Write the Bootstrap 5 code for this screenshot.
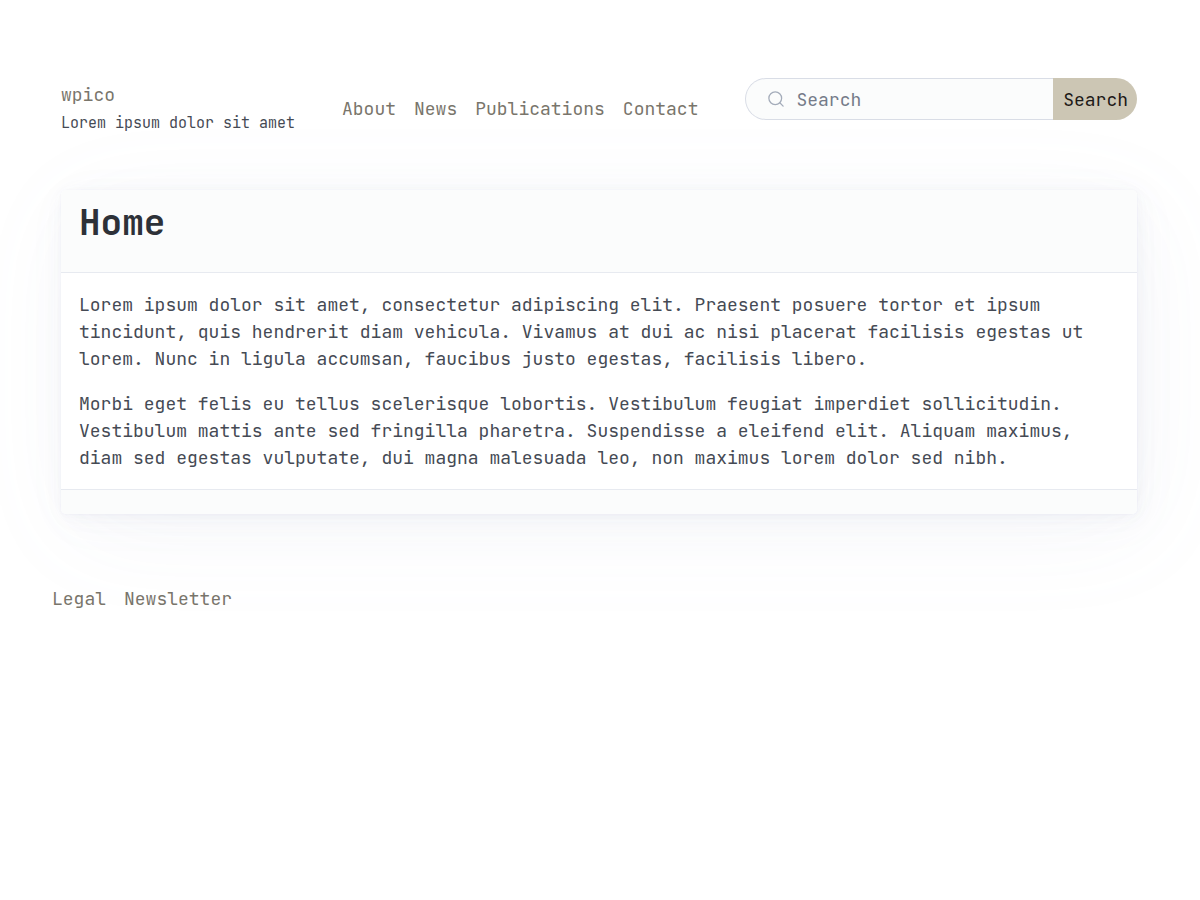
<!DOCTYPE html>
<html lang="en">
<head>
<meta charset="utf-8">
<meta name="viewport" content="width=device-width, initial-scale=1">
<title>Home - wpico</title>
<link href="https://cdn.jsdelivr.net/npm/bootstrap@5.3.0/dist/css/bootstrap.min.css" rel="stylesheet">
<style>
  body {
    font-family: "JetBrains Mono", "DejaVu Sans Mono", monospace;
    font-size: 18px;
    line-height: 27px;
    color: #454a54;
    background: #fff;
  }
  .site { padding: 0 63px 0 61px; }
  .site a { color: #79756b; }
  .site-header { padding: 78px 0 55px; column-gap: 47px; row-gap: 18px; }
  .brand { padding-top: 3px; }
  .tagline { font-size: 15px; line-height: 24px; padding-top: 3px; }
  .main-nav { padding-top: 17px; }
  .site-search { min-width: 280px; }
  .search-field {
    height: 42px;
    padding: 0 18px 0 50px;
    font-size: 18px;
    color: #23262c;
    background: #fbfcfc;
    border: 1px solid #d9dde6;
    border-right: 0;
    border-radius: 21px 0 0 21px;
    min-width: 0;
  }
  .search-field::placeholder { color: #757b89; }
  .search-icon { left: 22px; top: 12px; z-index: 6; color: #a4acba; }
  .search-button {
    height: 42px;
    padding: 0 9px 0 10px;
    font-size: 18px;
    color: #1c1917;
    background: #ccc6b4;
    border: 0;
    border-radius: 0 21px 21px 0;
  }
  .page-nav { gap: 18px; }
  .entry {
    border: 0;
    border-radius: 5px;
    color: inherit;
    box-shadow: 0 1px 3px rgba(129,145,181,.017), 1px 1px 7px rgba(129,145,181,.024),
      1px 2px 14px rgba(129,145,181,.03), 2px 4px 24px rgba(129,145,181,.036),
      4px 8px 45px rgba(129,145,181,.043), 9px 18px 108px rgba(129,145,181,.06),
      0 0 0 1px rgba(129,145,181,.015);
  }
  .entry .card-header { padding: 12px 18px 30px; background: #fbfcfc; border-color: #e7eaf0; }
  .entry .card-body { padding: 18px; }
  .entry .card-footer { padding: 12px; background: #fbfcfc; border-color: #e7eaf0; }
  .entry h1 { font-size: 36px; line-height: 40px; color: #2d3138; }
  .entry p { margin-bottom: 18px; }
  .site-footer { padding-top: 71px; margin-left: -9px; }
</style>
</head>
<body>
<div class="site container-fluid">
  <header class="site-header d-flex flex-wrap flex-lg-nowrap align-items-start">
    <div class="brand text-nowrap">
      <a href="#" class="text-decoration-none d-block">wpico</a>
      <div class="tagline">Lorem ipsum dolor sit amet</div>
    </div>
    <nav aria-label="Main" class="main-nav">
      <ul class="page-nav list-unstyled d-flex flex-wrap flex-md-nowrap mb-0">
        <li><a href="#" class="text-decoration-none">About</a></li>
        <li><a href="#" class="text-decoration-none">News</a></li>
        <li><a href="#" class="text-decoration-none">Publications</a></li>
        <li><a href="#" class="text-decoration-none">Contact</a></li>
      </ul>
    </nav>
    <form role="search" class="site-search position-relative d-flex flex-fill">
      <label for="s" class="search-icon position-absolute d-flex" aria-label="Search">
        <svg width="18" height="18" viewBox="0 0 24 24" fill="none" stroke="currentColor" stroke-width="1.7" stroke-linecap="round" aria-hidden="true"><circle cx="11" cy="11" r="8.5"/><path d="M21.5 21.5l-4.4-4.4"/></svg>
      </label>
      <input id="s" type="search" class="search-field form-control w-auto flex-fill" placeholder="Search">
      <button type="submit" class="search-button">Search</button>
    </form>
  </header>

  <main>
    <article class="entry card">
      <header class="card-header"><h1 class="fw-bold mb-0">Home</h1></header>
      <div class="card-body">
        <p>Lorem ipsum dolor sit amet, consectetur adipiscing elit. Praesent posuere tortor et ipsum tincidunt, quis hendrerit diam vehicula. Vivamus at dui ac nisi placerat facilisis egestas ut lorem. Nunc in ligula accumsan, faucibus justo egestas, facilisis libero.</p>
        <p class="mb-0">Morbi eget felis eu tellus scelerisque lobortis. Vestibulum feugiat imperdiet sollicitudin. Vestibulum mattis ante sed fringilla pharetra. Suspendisse a eleifend elit. Aliquam maximus, diam sed egestas vulputate, dui magna malesuada leo, non maximus lorem dolor sed nibh.</p>
      </div>
      <footer class="card-footer"></footer>
    </article>
  </main>

  <footer class="site-footer">
    <nav aria-label="Footer">
      <ul class="page-nav list-unstyled d-flex flex-wrap mb-0">
        <li><a href="#" class="text-decoration-none">Legal</a></li>
        <li><a href="#" class="text-decoration-none">Newsletter</a></li>
      </ul>
    </nav>
  </footer>
</div>
<script src="https://cdn.jsdelivr.net/npm/bootstrap@5.3.0/dist/js/bootstrap.bundle.min.js"></script>
</body>
</html>
